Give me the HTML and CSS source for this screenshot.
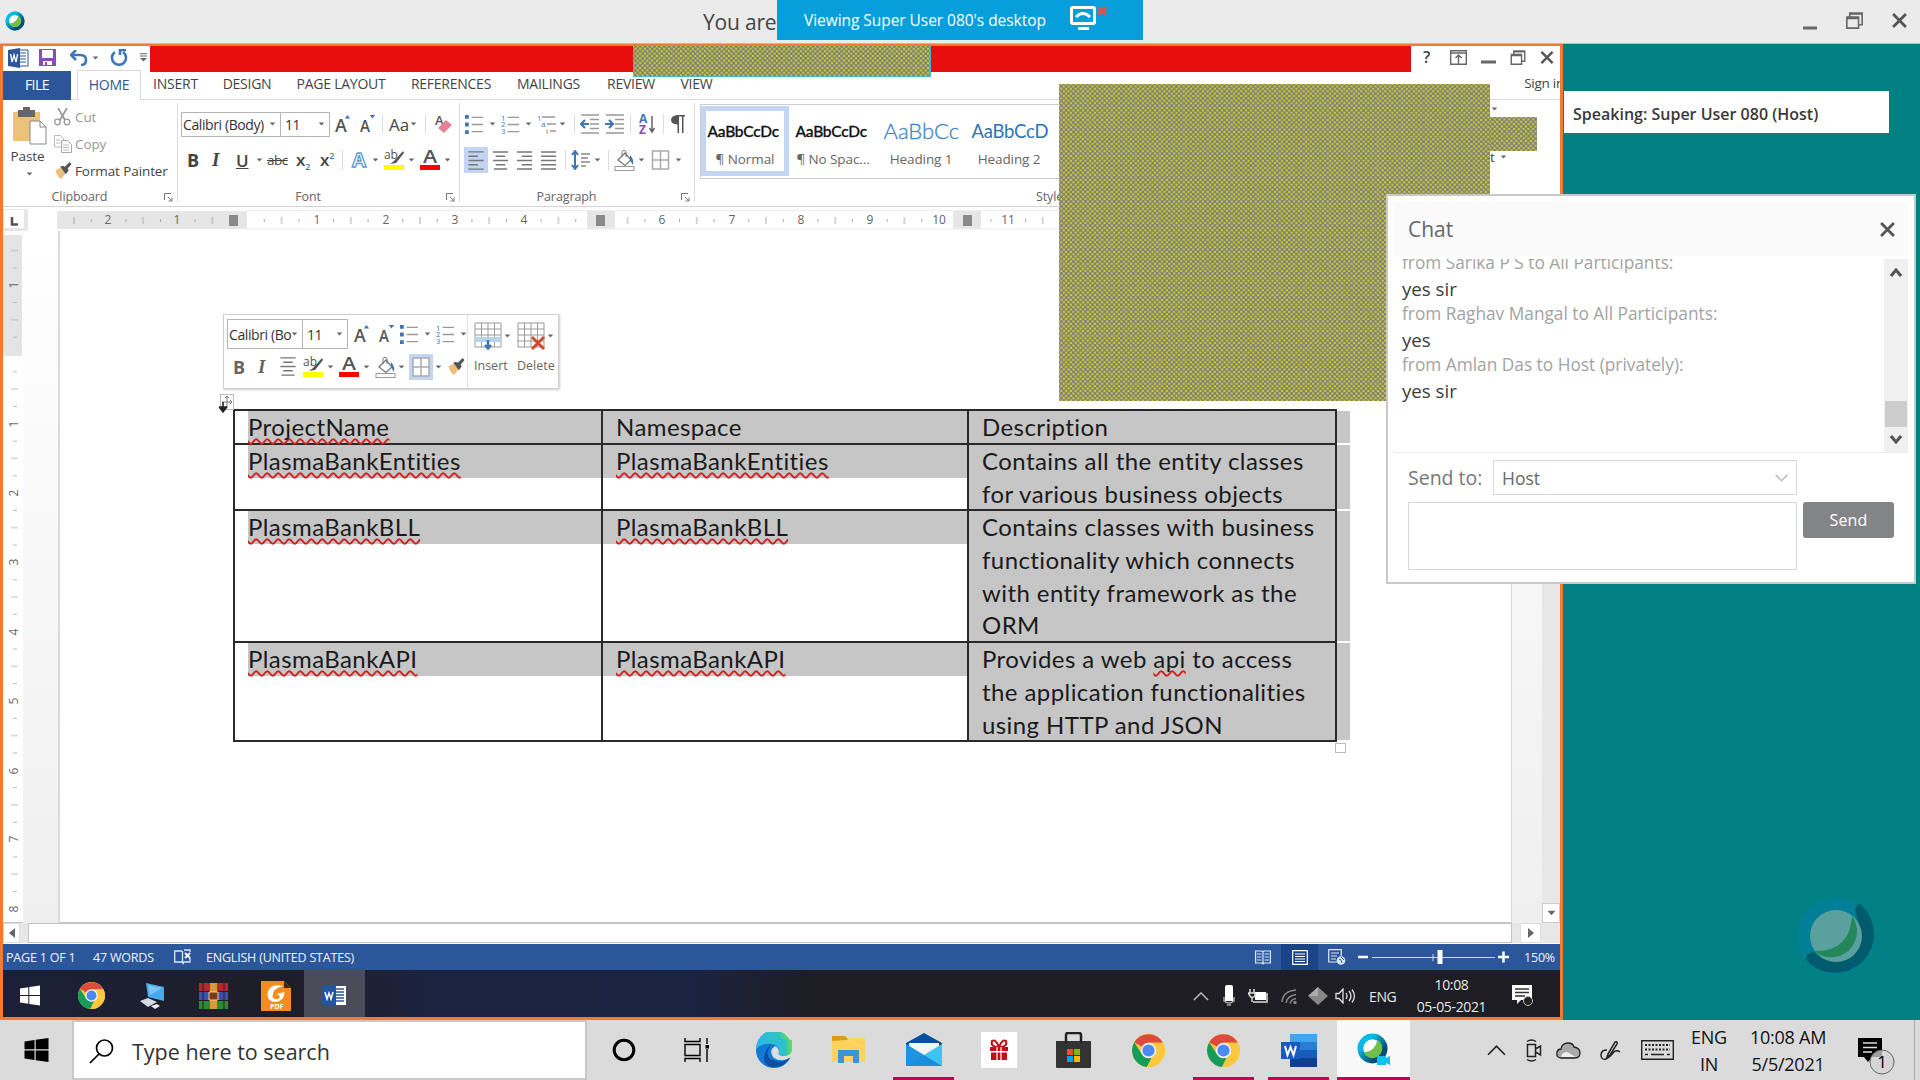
FILE: index.html
```html
<!DOCTYPE html>
<html lang="en">
<head>
<meta charset="utf-8">
<title>Viewing Super User 080's desktop</title>
<link rel="stylesheet" href="styles.css">
</head>
<body>
<svg class="defs" width="0" height="0">
  <defs>
    <symbol id="dd" viewBox="0 0 8 5"><path d="M0.5 0.5h7L4 4.5z" fill="#666"/></symbol>
    <symbol id="launch" viewBox="0 0 9 9"><path d="M.5 7V.5H7M4 4l3.5 3.5M8 4.500V8H4.500" fill="none" stroke="#777"/></symbol>
    <symbol id="bullets" viewBox="0 0 20 20"><path d="M0 2h4M0 10h4M0 18h4" stroke="#3f76b8" stroke-width="4"/><path d="M7 2.500h12M7 10h12M7 17.500h12" stroke="#999" stroke-width="1.400"/></symbol>
    <symbol id="numbers" viewBox="0 0 20 20"><g font-family="Open Sans" font-size="8" fill="#3f76b8"><text x="0" y="6">1</text><text x="0" y="13">2</text><text x="0" y="20">3</text></g><path d="M7 2.500h12M7 10h12M7 17.500h12" stroke="#999" stroke-width="1.400"/></symbol>
    <symbol id="bucket" viewBox="0 0 22 22"><rect x="1" y="17.500" width="19" height="4" fill="#fff" stroke="#999"/><path d="M4 11l7-7 6 7-6 5.500z" fill="#fff" stroke="#777" stroke-width="1.300"/><path d="M8 8V2.500q2-3 4 0V8" fill="none" stroke="#777"/><path d="M16 6q4 4 3 10-2-3-3-5z" fill="#3f76b8"/></symbol>
    <symbol id="grid4" viewBox="0 0 18 20"><path d="M1 1h16v18H1zM9 1v18M1 10h16" fill="#fff" stroke="#aaa" stroke-width="1.500"/></symbol>
    <symbol id="acenter" viewBox="0 0 18 20"><path d="M1 1h16M4 5.500h10M1 10h16M4 14.500h10M2 19h14" stroke="#777" stroke-width="1.400"/></symbol>
    <symbol id="hilite" viewBox="0 0 21 22"><text x="0" y="10" font-family="Open Sans" font-size="12" fill="#555">ab</text><path d="M19 2L10 12l-4 3 6-1 8-10z" fill="#555"/><path d="M0 18.500h20" stroke="#ff0" stroke-width="5"/></symbol>
    <symbol id="fontcol" viewBox="0 0 20 22"><text x="3" y="14" font-family="Open Sans" font-weight="600" font-size="18" fill="#555" textLength="14" lengthAdjust="spacingAndGlyphs">A</text><path d="M0 18.500h20" stroke="#f00" stroke-width="5"/></symbol>
    <symbol id="grow" viewBox="0 0 18 20"><text x="0" y="19" font-family="Open Sans" font-weight="600" font-size="20" fill="#555" textLength="13" lengthAdjust="spacingAndGlyphs">A</text><path d="M11 4l3-4 3 4z" fill="#3f76b8"/></symbol>
    <symbol id="shrink" viewBox="0 0 18 20"><text x="0" y="19" font-family="Open Sans" font-weight="600" font-size="17" fill="#555" textLength="11" lengthAdjust="spacingAndGlyphs">A</text><path d="M11 0h6l-3 4z" fill="#3f76b8"/></symbol>
    <symbol id="brush" viewBox="0 0 18 18"><path d="M1 9l5-3 6 6-5 6q-4-2-6-9z" fill="#eebf7a"/><path d="M6 5l3-1 2 1 5-5 2 2-4 5 1 2-3 4z" fill="#555"/></symbol>
    <symbol id="winlogo" viewBox="0 0 24 24"><path d="M0 3.500L10 2v9.300H0zM11.200 1.800L24 0v11.300H11.200zM0 12.600h10V22L0 20.500zM11.200 12.600H24V24L11.200 22.200z"/></symbol>
    <symbol id="chrome" viewBox="0 0 32 32"><circle cx="16" cy="16" r="16" fill="#fbc83b"/><path d="M16 16L2.200 8A16 16 0 0 1 30 8.500H16z" fill="#dd4b3e"/><path d="M2.200 8A16 16 0 0 0 14.500 32l7-12.500L16 16 9.500 19.700z" fill="#159c58"/><path d="M30 8.500H16l6 8L14.500 32A16 16 0 0 0 30 8.500z" fill="#fdc83e"/><circle cx="16" cy="16" r="7.400" fill="#f5f5f5"/><circle cx="16" cy="16" r="5.900" fill="#4a8af4"/></symbol>
    <symbol id="chev" viewBox="0 0 18 10"><path d="M1 9l8-8 8 8" fill="none" stroke="currentColor" stroke-width="1.600"/></symbol>
    <symbol id="pane" viewBox="0 0 16 16"><path d="M.8 4.800h11v10.400h-11zM3.500 4.500V1h11.700v11H12" fill="none" stroke="#666" stroke-width="1.500"/><path d="M.8 6h11M3.500 1.800h11.700" stroke="#666" stroke-width="1.500"/></symbol>
    <symbol id="cross" viewBox="0 0 14 14"><path d="M1 1l12 12M13 1L1 13" stroke="#555" stroke-width="2.600"/></symbol>
    <linearGradient id="ring" x1="0" y1="0" x2="1" y2="1"><stop offset=".25" stop-color="#07b9e8"/><stop offset=".75" stop-color="#064f73"/></linearGradient>
    <symbol id="webex" viewBox="0 0 32 32"><circle cx="16" cy="16" r="12.500" fill="#fff" stroke="url(#ring)" stroke-width="6"/><path d="M21 7a10 10 0 1 1-14 13Q19 19 21 7z" fill="#6fbf4a"/></symbol>
  </defs>
</svg>

<div class="screen">
  <header class="titlebar">
    <svg class="tb-logo" width="20" height="22"><use href="#webex" width="20" height="22"/></svg>
    <span class="tb-text">You are</span>
    <div class="tb-controls">
      <svg width="14" height="18"><path d="M0 16h14" stroke="#666" stroke-width="3"/></svg>
      <svg width="17" height="17"><use href="#pane"/></svg>
      <svg width="15" height="15"><use href="#cross"/></svg>
    </div>
    <div class="banner"><span>Viewing Super User 080's desktop</span>
      <svg width="38" height="26" viewBox="0 0 38 26"><rect x="1.500" y="1.500" width="23" height="16" rx="1.500" fill="none" stroke="#fff" stroke-width="3"/><path d="M6 11q7-7 14 0" fill="none" stroke="#fff" stroke-width="3"/><path d="M8 22.500h11" stroke="#fff" stroke-width="3"/><path d="M28 1.500l8 7M36 1.500l-8 7" stroke="#e0524e" stroke-width="3.200"/></svg>
    </div>
  </header>

  <main class="stage">
    <section class="remote">
      <div class="word-title">
        <div class="qat">
          <svg width="21" height="20" viewBox="0 0 21 20"><path d="M9 2h11v16H9z" fill="#fff" stroke="#2b579a"/><path d="M12 5h6M12 8h6M12 11h6M12 14h6" stroke="#2b579a"/><path d="M0 2l12-2v20L0 18z" fill="#2b579a"/><path d="M2.500 6l1.600 8L6 7l2 7 1.600-8" fill="none" stroke="#fff" stroke-width="1.300"/></svg>
          <svg width="17" height="17" viewBox="0 0 17 17"><path d="M0 0h17v17H0z" fill="#8a4db5"/><path d="M3 1h11v8H3zM4 12h9v4H4z" fill="#fff"/><path d="M6 13h2v3H6z" fill="#8a4db5"/></svg>
          <svg width="18" height="16" viewBox="0 0 18 16"><path d="M6 0L1 5l5 5M1 5h9q6 0 6 5t-5 5" fill="none" stroke="#3f76b8" stroke-width="2.600"/></svg>
          <svg width="7" height="4"><use href="#dd"/></svg>
          <svg width="18" height="17" viewBox="0 0 18 17"><path d="M5 3a7 7 0 1 0 8 0M10 6V1h6" fill="none" stroke="#3f76b8" stroke-width="2.600"/></svg>
          <svg width="7" height="9" viewBox="0 0 7 9"><path d="M0 .7h7M0 3h7" stroke="#666"/><path d="M0 5h7L3.500 8.500z" fill="#666"/></svg>
        </div>
        <div class="redbar"></div>
        <div class="word-ctl">
          <span>?</span>
          <svg width="17" height="15" viewBox="0 0 17 15"><path d="M.7.700h15.600v13.600H.7zM.7 3h15.600M8.500 14V5M5.500 8l3-3 3 3" fill="none" stroke="#666" stroke-width="1.400"/></svg>
          <svg width="15" height="14"><path d="M0 12h15" stroke="#666" stroke-width="3"/></svg>
          <svg width="16" height="15"><use href="#pane"/></svg>
          <svg width="14" height="13"><use href="#cross"/></svg>
        </div>
      </div>

      <nav class="tabs">
        <span class="file">FILE</span><span class="home">HOME</span><span>INSERT</span><span>DESIGN</span><span>PAGE LAYOUT</span><span>REFERENCES</span><span>MAILINGS</span><span>REVIEW</span><span>VIEW</span><span class="signin">Sign in</span>
      </nav>

      <div class="ribbon">
        <div class="group clip">
          <div class="paste">
            <svg width="34" height="38" viewBox="0 0 34 38"><path d="M0 5h27v29H0z" fill="#ecc27a"/><path d="M5 3h5V0h7v3h5v7H5z" fill="#666"/><path d="M17 14h10l6 6v17H17z" fill="#fff" stroke="#888"/><path d="M27 14v6h6" fill="none" stroke="#888"/></svg>
            <span>Paste</span>
            <svg width="7" height="4"><use href="#dd"/></svg>
          </div>
          <div class="cliplist">
            <svg width="17" height="18" viewBox="0 0 17 18"><path d="M4 0l7 12M13 0L6 12" stroke="#999" stroke-width="1.800"/><circle cx="3.500" cy="14" r="2.800" fill="none" stroke="#999" stroke-width="1.300"/><circle cx="13" cy="14" r="2.800" fill="none" stroke="#999" stroke-width="1.300"/></svg><span class="dim">Cut</span>
            <svg width="18" height="18" viewBox="0 0 18 18"><path d="M.5.500h6l3 3V12h-9z" fill="#fff" stroke="#bbb"/><path d="M7.500 5.500h6l4 4v8h-10z" fill="#fff" stroke="#aaa"/><path d="M9 10h6M9 12.500h6M9 15h6M2 5h4M2 8h4" stroke="#bbb"/></svg><span class="dim">Copy</span>
            <svg width="18" height="17"><use href="#brush"/></svg><span>Format Painter</span>
          </div>
          <div class="glabel"><span>Clipboard</span><svg width="9" height="9"><use href="#launch"/></svg></div>
        </div>

        <div class="group font">
          <div class="row f1">
            <div class="combo"><span>Calibri (Body)</span><svg width="7" height="4"><use href="#dd"/></svg></div>
            <div class="combo size"><span>11</span><svg width="7" height="4"><use href="#dd"/></svg></div>
            <svg width="18" height="18"><use href="#grow"/></svg>
            <svg width="18" height="18"><use href="#shrink"/></svg>
            <i class="sep"></i>
            <span class="aa">Aa</span>
            <svg width="7" height="4"><use href="#dd"/></svg>
            <i class="sep"></i>
            <svg width="17" height="20" viewBox="0 0 17 20"><text x="0" y="11" font-family="Open Sans" font-size="13" font-weight="600" fill="#555">A</text><path d="M3 14l8-8 6 5-8 8z" fill="#e58298"/></svg>
          </div>
          <div class="row f2">
            <b class="bold">B</b><i class="ital">I</i><span class="under">U</span><svg width="7" height="4"><use href="#dd"/></svg><s class="strike">abc</s>
            <span class="subx">x<sub>2</sub></span><span class="subx">x<sup>2</sup></span><i class="sep"></i>
            <svg width="16" height="20" viewBox="0 0 16 20"><text x="1" y="17" font-family="Open Sans" font-weight="700" font-size="20" fill="#fff" stroke="#5b9bd5" stroke-width="1.300" textLength="14" lengthAdjust="spacingAndGlyphs">A</text></svg>
            <svg width="7" height="4"><use href="#dd"/></svg>
            <svg width="21" height="22"><use href="#hilite"/></svg><svg width="7" height="4"><use href="#dd"/></svg>
            <svg width="20" height="22"><use href="#fontcol"/></svg><svg width="7" height="4"><use href="#dd"/></svg>
          </div>
          <div class="glabel"><span>Font</span><svg width="9" height="9"><use href="#launch"/></svg></div>
        </div>

        <div class="group para">
          <div class="row p1">
            <svg width="19" height="19"><use href="#bullets"/></svg><svg width="7" height="4"><use href="#dd"/></svg>
            <svg width="19" height="19"><use href="#numbers"/></svg><svg width="7" height="4"><use href="#dd"/></svg>
            <svg width="20" height="20" viewBox="0 0 20 20"><g font-family="Open Sans" font-size="8" fill="#3f76b8"><text x="0" y="7">1</text><text x="4" y="13">a</text><text x="9" y="20">i</text></g><path d="M5 3h13M10 10h9M13 17h6" stroke="#999" stroke-width="1.400"/></svg><svg width="7" height="4"><use href="#dd"/></svg>
            <i class="sep"></i>
            <svg width="20" height="20" viewBox="0 0 20 20"><path d="M1 1h18M10 5.500h9M10 10h9M10 14.500h9M1 19h18" stroke="#999" stroke-width="1.400"/><path d="M9 10H2M5 6l-4 4 4 4" fill="none" stroke="#3f76b8" stroke-width="2.200"/></svg>
            <svg width="20" height="20" viewBox="0 0 20 20"><path d="M1 1h18M10 5.500h9M10 10h9M10 14.500h9M1 19h18" stroke="#999" stroke-width="1.400"/><path d="M0 10h7M4 6l4 4-4 4" fill="none" stroke="#3f76b8" stroke-width="2.200"/></svg>
            <i class="sep"></i>
            <svg width="17" height="21" viewBox="0 0 17 21"><g font-family="Open Sans" font-weight="700" font-size="12"><text x="0" y="9" fill="#3f76b8">A</text><text x="0" y="20" fill="#8a4db5">Z</text></g><path d="M13 2v15M10.500 14l2.500 4 2.500-4" fill="none" stroke="#666" stroke-width="1.500"/></svg>
            <i class="sep"></i>
            <svg width="14" height="18" viewBox="0 0 14 18"><path d="M6 0h8v1.500h-1.500V18h-1.500V1.500H8V18H6.500V9.500Q0 9 0 5T6 0z" fill="#555"/></svg>
          </div>
          <div class="row p2">
            <div class="on"><svg width="18" height="19" viewBox="0 0 18 20"><path d="M1 1h16M1 5.500h10M1 10h16M1 14.500h10M1 19h16" stroke="#777" stroke-width="1.400"/></svg></div>
            <svg width="17" height="19"><use href="#acenter"/></svg>
            <svg width="17" height="19" viewBox="0 0 18 20"><path d="M1 1h16M6 5.500h11M1 10h16M6 14.500h11M1 19h16" stroke="#777" stroke-width="1.400"/></svg>
            <svg width="17" height="19" viewBox="0 0 18 20"><path d="M1 1h16M1 5.500h16M1 10h16M1 14.500h16M1 19h16" stroke="#777" stroke-width="1.400"/></svg>
            <i class="sep"></i>
            <svg width="20" height="20" viewBox="0 0 20 20"><path d="M4 2v16M1 5l3-4 3 4M1 15l3 4 3-4" fill="none" stroke="#3f76b8" stroke-width="2"/><path d="M10 4h9M10 8h7M10 12h9M10 16h5" stroke="#888" stroke-width="1.400"/></svg><svg width="7" height="4"><use href="#dd"/></svg>
            <i class="sep"></i>
            <svg width="22" height="22"><use href="#bucket"/></svg><svg width="7" height="4"><use href="#dd"/></svg>
            <svg width="19" height="20"><use href="#grid4"/></svg><svg width="7" height="4"><use href="#dd"/></svg>
          </div>
          <div class="glabel"><span>Paragraph</span><svg width="9" height="9"><use href="#launch"/></svg></div>
        </div>

        <div class="group styles">
          <div class="gallery">
            <div class="sty sel"><span>AaBbCcDc</span><small>¶ Normal</small></div>
            <div class="sty"><span>AaBbCcDc</span><small>¶ No Spac...</small></div>
            <div class="sty h1"><span>AaBbCc</span><small>Heading 1</small></div>
            <div class="sty h2"><span>AaBbCcD</span><small>Heading 2</small></div>
          </div>
          <div class="glabel"><span>Styles</span></div>
        </div>
        <div class="group edit">
          <svg width="7" height="4"><use href="#dd"/></svg>
          <span>t <svg width="7" height="4"><use href="#dd"/></svg></span>
        </div>
      </div>

      <div class="hruler">
        <svg width="1554" height="24" viewBox="3 207 1554 24">
          <defs><pattern id="ticks" x="247" y="0" width="69.2" height="300" patternUnits="userSpaceOnUse"><path d="M17.300 219v3M51.900 219v3" stroke="#aaa"/><path d="M34.600 217v7" stroke="#aaa"/></pattern></defs>
          <path d="M3 209h25v22H3z" fill="#e6e6e6"/><path d="M4 210h20v18H4z" fill="#fff"/><path d="M12 217v7.500h6" fill="none" stroke="#555" stroke-width="2.500"/>
          <path d="M57 211h190v18H57zM587 211h28v18h-28zM953 211h28v18h-28z" fill="#e6e6e6"/>
          <path d="M247 210.500h1145M247 229h1145" stroke="#eee"/>
          <path d="M66 211h160v18H66zM255 211h330v18H255zM616 211h336v18H616zM983 211h408v18H983z" fill="url(#ticks)"/>
          <path d="M229 215h9v11h-9zM596 215h9v11h-9zM963 215h9v11h-9z" fill="#8a8a8a"/>
          <g class="nums"><text x="108" y="224">2</text><text x="177" y="224">1</text><text x="317" y="224">1</text><text x="386" y="224">2</text><text x="455" y="224">3</text><text x="524" y="224">4</text><text x="662" y="224">6</text><text x="732" y="224">7</text><text x="801" y="224">8</text><text x="870" y="224">9</text><text x="939" y="224">10</text><text x="1008" y="224">11</text></g>
        </svg>
      </div>

      <div class="work">
        <div class="vruler">
          <svg width="20" height="692" viewBox="3 231 20 692">
            <defs><pattern id="vticks" x="0" y="354.500" width="30" height="69.300" patternUnits="userSpaceOnUse"><path d="M13 17.300h4M13 52h4" stroke="#bbb"/><path d="M11 34.600h7" stroke="#bbb"/></pattern></defs>
            <path d="M3 235h19v121H3z" fill="#e4e4e4"/><path d="M3 240h20v683H3z" fill="url(#vticks)"/>
            <g class="nums"><text transform="translate(18 285)rotate(-90)">1</text><text transform="translate(18 424)rotate(-90)">1</text><text transform="translate(18 493)rotate(-90)">2</text><text transform="translate(18 562)rotate(-90)">3</text><text transform="translate(18 632)rotate(-90)">4</text><text transform="translate(18 701)rotate(-90)">5</text><text transform="translate(18 771)rotate(-90)">6</text><text transform="translate(18 839)rotate(-90)">7</text><text transform="translate(18 909)rotate(-90)">8</text></g>
          </svg>
        </div>
        <div class="gutter"></div>
        <div class="page">
          <div class="tablewrap">
            <table>
              <colgroup><col class="c1"><col class="c2"><col class="c3"></colgroup>
              <tr class="r1"><td><p><u>ProjectName</u></p></td><td><p>Namespace</p></td><td><p>Description</p></td></tr>
              <tr class="r2"><td><p><u>PlasmaBankEntities</u></p></td><td><p><u>PlasmaBankEntities</u></p></td><td><p>Contains all the entity classes<br>for various business objects</p></td></tr>
              <tr class="r3"><td><p><u>PlasmaBankBLL</u></p></td><td><p><u>PlasmaBankBLL</u></p></td><td><p>Contains classes with business<br>functionality which connects<br>with entity framework as the<br>ORM</p></td></tr>
              <tr class="r4"><td><p><u>PlasmaBankAPI</u></p></td><td><p><u>PlasmaBankAPI</u></p></td><td><p>Provides a web <u>api</u> to access<br>the application functionalities<br>using HTTP and JSON</p></td></tr>
            </table>
            <div class="tail"><i></i><i></i><i></i><i></i></div>
          </div>
          <svg class="handle" width="19" height="22" viewBox="0 0 19 22"><rect x="2.500" y=".5" width="13" height="15" fill="#fff" stroke="#bbb"/><path d="M9 2v12M4 8h10M7 4l2-2 2 2M12 6l2 2-2 2" fill="none" stroke="#777"/><path d="M5 8v10M1 13h8M2 14l3 4 3-4z" fill="#222" stroke="#222" stroke-width="1.600"/></svg>
          <i class="corner"></i>
          <div class="mini">
            <div class="mtools">
              <div class="row m1">
                <div class="combo"><span>Calibri (Bo</span><svg width="7" height="4"><use href="#dd"/></svg></div>
                <div class="combo size"><span>11</span><svg width="7" height="4"><use href="#dd"/></svg></div>
                <svg width="18" height="18"><use href="#grow"/></svg><svg width="18" height="18"><use href="#shrink"/></svg>
                <svg width="19" height="19"><use href="#bullets"/></svg><svg width="7" height="4"><use href="#dd"/></svg>
                <svg width="19" height="19"><use href="#numbers"/></svg><svg width="7" height="4"><use href="#dd"/></svg>
              </div>
              <div class="row m2">
                <b class="bold">B</b><i class="ital">I</i><svg width="18" height="19"><use href="#acenter"/></svg>
                <svg width="21" height="22"><use href="#hilite"/></svg><svg width="7" height="4"><use href="#dd"/></svg>
                <svg width="20" height="22"><use href="#fontcol"/></svg><svg width="7" height="4"><use href="#dd"/></svg>
                <svg width="22" height="22"><use href="#bucket"/></svg><svg width="7" height="4"><use href="#dd"/></svg>
                <div class="on"><svg width="18" height="20"><use href="#grid4"/></svg></div><svg width="7" height="4"><use href="#dd"/></svg>
                <svg width="18" height="17"><use href="#brush"/></svg>
              </div>
            </div>
            <div class="mbig"><div><svg width="30" height="28" viewBox="0 0 30 28"><path d="M1 1h26v24H1zM1 7h26M1 13h26M1 19h26M7.500 1v24M14 1v24M20.500 1v24" fill="#fff" stroke="#999"/><path d="M1 15h26v5H1z" fill="#b8d3ee"/><path d="M14 18v8M11 23l3 3.500 3-3.500" fill="none" stroke="#3f76b8" stroke-width="2.500"/></svg><svg width="7" height="4"><use href="#dd"/></svg></div><span>Insert</span></div>
            <div class="mbig del"><div><svg width="30" height="28" viewBox="0 0 30 28"><path d="M1 1h26v24H1zM1 7h26M1 13h26M1 19h26M7.500 1v24M14 1v24M20.500 1v24" fill="#fff" stroke="#999"/><path d="M15 15l12 12M27 15L15 27" stroke="#d04a30" stroke-width="3"/></svg><svg width="7" height="4"><use href="#dd"/></svg></div><span>Delete</span></div>
          </div>
        </div>
        <div class="gutter right"></div>
        <div class="vscroll"><div><svg width="9" height="6"><use href="#dd" width="9" height="6"/></svg></div></div>
      </div>

      <div class="hscroll"><div class="sb"><svg width="6" height="10"><path d="M6 0v10L0 5z" fill="#666"/></svg></div><div class="thumb"></div><div class="sb r"><svg width="6" height="10"><path d="M0 0v10l6-5z" fill="#666"/></svg></div></div>

      <div class="status">
        <span>PAGE 1 OF 1</span><span>47 WORDS</span>
        <svg width="18" height="16" viewBox="0 0 18 16"><path d="M8 2H.7v11H8l1 1.500 1-1.500h6V9M8.500 2v12M10 1h6v2" fill="none" stroke="#dfe8f5" stroke-width="1.300"/><path d="M11 4l5 5M16 4l-5 5" stroke="#fff" stroke-width="1.800"/></svg>
        <span>ENGLISH (UNITED STATES)</span>
        <svg width="16" height="15" viewBox="0 0 16 15"><path d="M.6 1H7l1 1 1-1h6.400v12H9l-1 1-1-1H.6zM8 2v12M2 4h4.500M2 7h4.500M2 10h4.500M9.500 4H14M9.500 7H14M9.500 10H14" fill="none" stroke="#dfe8f5" stroke-width="1.200"/></svg>
        <div class="view"><svg width="16" height="15" viewBox="0 0 16 15"><path d="M.7.700h14.600v13.600H.7zM3 4h10M3 6.500h10M3 9h10M3 11.500h10" fill="none" stroke="#fff" stroke-width="1.200"/></svg></div>
        <svg width="18" height="16" viewBox="0 0 18 16"><path d="M9 13H.7V.7h12.600V7M3 4h8M3 7h6M3 10h5" fill="none" stroke="#dfe8f5" stroke-width="1.200"/><circle cx="13" cy="11.500" r="4.300" fill="#dfe8f5"/><path d="M11 10l2 1 1 3M13 8l3 3" stroke="#2b579a" fill="none"/></svg>
        <svg width="154" height="16" viewBox="0 0 154 16"><path d="M1 8h10M141 8h11M146.500 2.500v11" stroke="#fff" stroke-width="2.500"/><path d="M15 8.500h123" stroke="#cdd9ec"/><path d="M76 5v7" stroke="#cdd9ec"/><path d="M83 1v14" stroke="#fff" stroke-width="5"/></svg>
        <span>150%</span>
      </div>

      <div class="inner-bar">
        <div class="cell"><svg width="20" height="21" fill="#fff"><use href="#winlogo" width="20" height="21"/></svg></div>
        <div class="cell"><svg width="27" height="27"><use href="#chrome"/></svg></div>
        <div class="cell"><svg width="28" height="27" viewBox="0 0 28 27"><path d="M7 1l18 4v14L9 15z" fill="#4aa9ee"/><path d="M9 3l14 3-12 7z" fill="#7cc6f7"/><path d="M1 19l8-3 9 4-9 5z" fill="#d5dbe0"/><path d="M12 24l6-2 3 2-5 3z" fill="#e8ecef"/></svg></div>
        <div class="cell"><svg width="30" height="26" viewBox="0 0 30 26"><path d="M0 0h29v8H0z" fill="#b5262f"/><path d="M0 9h29v8H0z" fill="#3d4fb0"/><path d="M0 18h29v8H0z" fill="#2c8a36"/><path d="M11 0h7v26h-7z" fill="#d79b33"/><path d="M10 9h9v8h-9z" fill="#7a3a22" stroke="#f3d27a"/><path d="M4 0v26M25 0v26" stroke="#222" stroke-opacity=".5" stroke-width="2"/></svg></div>
        <div class="cell"><svg width="30" height="30" viewBox="0 0 30 30"><path d="M0 0h23l7 7v23H0z" fill="#f68b1f"/><path d="M23 0v7h7" fill="#3a2a1a"/><path d="M22 5Q8 2 6.500 13q0 8 8 8 9-1 9-10l-8 2q4 1 3 4-4 3-7-1 0-9 10.500-11z" fill="#fff"/><text x="9" y="28" font-family="Open Sans" font-weight="700" font-size="7" fill="#fff">PDF</text></svg></div>
        <div class="cell active"><svg width="25" height="21" viewBox="0 0 25 21"><path d="M12 1h12v19H12z" fill="#fff"/><path d="M14 4h8M14 7h8M14 10h8M14 13h8M14 16h8" stroke="#2b579a" stroke-width="1.500"/><path d="M0 1l14-1v21L0 20z" fill="#20559f"/><path d="M3 7l2 7 2-6 2 6 2-7" fill="none" stroke="#fff" stroke-width="1.500"/></svg></div>
        <div class="itray">
          <svg width="16" height="9" color="#bbb"><use href="#chev"/></svg>
          <svg width="14" height="22" viewBox="0 0 14 22"><rect x="3" y="0" width="8" height="15" rx="2" fill="#fff"/><path d="M2 12v4q5 4 10 0v-4M5 20h4" fill="none" stroke="#aaa" stroke-width="1.500"/><path d="M3 6h8v10H3z" fill="#fff"/></svg>
          <svg width="21" height="15" viewBox="0 0 21 15"><path d="M7 3h11v8H7z" fill="#fff"/><path d="M5 13h14V4M2 0v4M6 0v4M0 4h7v3q-3 3-5 0zM4 9v4" fill="none" stroke="#ddd" stroke-width="1.500"/></svg>
          <svg width="17" height="17" viewBox="0 0 17 17" fill="none" stroke="#888" stroke-width="1.500"><path d="M1 14Q2 3 15 2M5 15Q6 8 15 6.500M9 15.500q1-4 6-5"/><circle cx="14" cy="14.500" r="1" fill="#ddd"/></svg>
          <svg width="20" height="18" viewBox="0 0 20 18"><path d="M10 0l10 9-10 9L0 9z" fill="#888"/><path d="M10 0v9H0z" fill="#aaa"/></svg>
          <svg width="21" height="16" viewBox="0 0 21 16" fill="none" stroke="#ddd" stroke-width="1.300"><path d="M1 5.500h3L8 1v14l-4-4.500H1zM11 5q2 3 0 6M14 3q4 5 0 10M17 1.500q5 6.500 0 13"/></svg>
          <span>ENG</span><div class="clock"><span>10:08</span><span>05-05-2021</span></div>
          <svg width="22" height="22" viewBox="0 0 22 22"><path d="M0 0h20v15H9l-4 4v-4H0z" fill="#fff"/><path d="M3 4h14M3 7.500h14M3 11h10" stroke="#333" stroke-width="1.300"/><circle cx="16" cy="16" r="4.500" fill="#222" stroke="#bbb"/></svg>
        </div>
      </div>
      <div class="hatch top"></div>
      <div class="hatch big"></div>
      <div class="hatch ear"></div>
    </section>

    <aside class="side">
      <div class="speaking">Speaking: Super User 080 (Host)</div>
      <svg class="mark" width="80" height="80" viewBox="0 0 80 80"><circle cx="40" cy="40" r="39" fill="#007f96"/><path d="M64 8A39 39 0 1 1 10 64Q10 57 17 56 38 70 58 51 66 35 59 14 60 8 64 8z" fill="#005c6c"/><circle cx="40" cy="40" r="26" fill="#5b9f9f"/><path d="M56 20A26 26 0 0 1 18 55Q54 56 56 20z" fill="#238759"/></svg>
    </aside>

    <section class="chat">
      <div class="chat-head"><span>Chat</span><svg width="15" height="15"><use href="#cross"/></svg></div>
      <div class="chat-body">
        <div class="msgs"><p class="from">from Sarika P S to All Participants:</p><p>yes sir</p><p class="from">from Raghav Mangal to All Participants:</p><p>yes</p><p class="from">from Amlan Das to Host (privately):</p><p>yes sir</p></div>
        <div class="cscroll"><svg width="12" height="9" viewBox="0 0 12 9"><path d="M1 8l5-6 5 6" fill="none" stroke="#555" stroke-width="3"/></svg><i></i><svg width="12" height="9" viewBox="0 0 12 9"><path d="M1 1l5 6 5-6" fill="none" stroke="#555" stroke-width="3"/></svg></div>
      </div>
      <div class="chat-form">
        <label>Send to:</label><div class="select"><span>Host</span><svg width="13" height="8" viewBox="0 0 13 8"><path d="M.7.700l5.800 6 5.800-6" fill="none" stroke="#bbb" stroke-width="1.600"/></svg></div>
        <div class="input"></div><button>Send</button>
      </div>
    </section>
  </main>

  <footer class="taskbar">
    <div class="start"><svg width="25" height="24"><use href="#winlogo"/></svg></div>
    <div class="search"><svg width="25" height="25" viewBox="0 0 25 25"><circle cx="15.500" cy="9" r="8" fill="none" stroke="#000" stroke-width="1.700"/><path d="M10 15L1 24" stroke="#000" stroke-width="1.700"/></svg><span>Type here to search</span></div>
    <div class="apps">
      <div><svg width="24" height="24"><circle cx="12" cy="12" r="9.800" fill="none" stroke="#000" stroke-width="3"/></svg></div>
      <div><svg class="tv" width="26" height="24" viewBox="0 0 26 24"><path d="M1 6.500h15v11H1zM1 0v3.500h15V0M1 24v-3.500h15V24M23 0v6M23 11v13" fill="none" stroke="#000" stroke-width="1.400"/><path d="M21.500 7h3.500v3.500h-3.500z"/></svg></div>
      <div><svg width="36" height="36" viewBox="0 0 36 36"><defs><linearGradient id="ed"><stop offset="0" stop-color="#2fb5ea"/><stop offset=".6" stop-color="#2dc5c0"/><stop offset="1" stop-color="#6be14a"/></linearGradient></defs><circle cx="18" cy="18" r="18" fill="#0f7bd6"/><path d="M0 17A18 18 0 0 1 36 16q0 9-9 8-6-1-4-4 1-7-7-8Q5 11 0 17z" fill="url(#ed)"/><path d="M15 13Q6 26 20 29q9 2 14-4-5 11-18 10Q4 32 10 19q2-4 5-6z" fill="#0c4ea0"/><path d="M19 14q-7 5-1 12 8 5 18-1.500V18q-1 6-9 6-6-1-4-4 0-4-4-6z" fill="#dcdcdc"/><path d="M19.500 14q5 2 3.500 6-2 3 4 4 8 0 9-7V8L22 6z" fill="url(#ed)"/></svg></div>
      <div><svg width="33" height="28" viewBox="0 0 33 28"><path d="M0 0h13l3 3v3H0z" fill="#dc9c12"/><path d="M0 5l15-1 2-2h16v24H0z" fill="#ffd35e"/><path d="M6 27V14h21v13h-6v-7h-9v7z" fill="#3b93d8"/></svg></div>
      <div class="run"><svg width="36" height="34" viewBox="0 0 36 34"><path d="M0 10L18 0l18 10v6H0z" fill="#0a4f9e"/><path d="M3 10h30v14H3z" fill="#f4f4f4"/><path d="M0 11l36 22H0z" fill="#1f93e0"/><path d="M36 11v22L18 22z" fill="#3cc5f2"/><path d="M0 33h36L18 22z" fill="#1a8fdc"/></svg></div>
      <div><svg width="36" height="36" viewBox="0 0 36 36"><path d="M0 0h36v36H0z" fill="#fff"/><path d="M9 15h18v4H9zM10 20.500h16V28H10z" fill="#c01018"/><path d="M18 15Q9 15 11 9q4-2 7 6 3-8 7-6 2 6-7 6z" fill="none" stroke="#c01018" stroke-width="2"/><path d="M16 15v13M20 15v13" stroke="#fff" stroke-width="1.200"/></svg></div>
      <div><svg width="35" height="36" viewBox="0 0 35 36"><path d="M0 9h35v26q0 1-1 1H1q-1 0-1-1z" fill="#333"/><path d="M10 11V3q0-2 2-2h11q2 0 2 2v8" fill="none" stroke="#222" stroke-width="2.500"/><path d="M11 17h6v6h-6z" fill="#f25022"/><path d="M18 17h6v6h-6z" fill="#7fba00"/><path d="M11 24h6v6h-6z" fill="#00a4ef"/><path d="M18 24h6v6h-6z" fill="#ffb900"/></svg></div>
      <div><svg width="33" height="33"><use href="#chrome"/></svg></div>
      <div class="run"><svg width="33" height="33"><use href="#chrome"/></svg></div>
      <div class="run"><svg width="36" height="33" viewBox="0 0 36 33"><path d="M9 0h27v8H9z" fill="#41a5ee"/><path d="M9 8h27v8H9z" fill="#2b7cd3"/><path d="M9 16h27v8H9z" fill="#185abd"/><path d="M9 24h27v9H9z" fill="#103f91"/><path d="M0 8h19v17H0z" fill="#185abd"/><path d="M4 12l2.500 9L9.500 13l3 8 2.500-9" fill="none" stroke="#fff" stroke-width="2"/></svg></div>
      <div class="cur"><svg width="34" height="34" viewBox="0 0 34 34"><use href="#webex" width="31" height="31"/><path d="M20 23h9v2l4-2v9l-4-2v2h-9z" fill="#11bff0"/></svg></div>
    </div>
    <div class="tray">
      <svg width="19" height="11" color="#222"><use href="#chev"/></svg>
      <svg width="17" height="23" viewBox="0 0 17 23" fill="none" stroke="#222" stroke-width="1.500"><path d="M2.500 5.500h8v12h-8zM10.500 10l5-3v9l-5-3M2 2.500q4.500-3 9 0M2 20.500q4.500 3 9 0"/></svg>
      <svg width="25" height="17" viewBox="0 0 25 17"><path d="M5 16Q0 16 1 10q1-3 4-3Q6 1 12 1q5 0 6 4 6 1 6 6 0 5-5 5z" fill="#aaa" stroke="#222" stroke-width="1.300"/><path d="M5 15q1-5 6-5l9 5z" fill="#eee"/></svg>
      <svg width="21" height="21" viewBox="0 0 21 21" fill="none" stroke="#222" stroke-width="1.500"><path d="M8 14L15 2q3-1 2 2L10 15l-3 2zM7 10q-6 0-6 5t5 4q4-2 7-6t7-1"/></svg>
      <svg width="33" height="20" viewBox="0 0 33 20"><path d="M.7.700h31.600v18.600H.7z" fill="none" stroke="#222" stroke-width="1.400"/><path d="M4 5h25M4 9.500h25" stroke="#222" stroke-width="1.800" stroke-dasharray="2 1.500"/><path d="M4 14.500h3M10 14.500h13M26 14.500h3" stroke="#222" stroke-width="1.500"/></svg>
      <div class="clock"><span>ENG</span><span>IN</span></div>
      <div class="clock time"><span>10:08 AM</span><span>5/5/2021</span></div>
      <svg class="note" width="38" height="38" viewBox="0 0 38 38"><path d="M0 0h24v19H14l-4 5-4-5H0z"/><path d="M5 5h14M5 9.500h14M5 14h9" stroke="#ddd" stroke-width="1.300"/><circle cx="24" cy="24" r="12" fill="#d4d4d4" fill-opacity=".75" stroke="#666"/><text x="24" y="30" text-anchor="middle" font-family="Open Sans" font-size="17">1</text></svg>
      <i class="edge"></i>
    </div>
  </footer>
</div>
</body>
</html>
```
FILE: styles.css
```css
* { box-sizing: border-box; margin: 0; padding: 0; }
body { width: 1920px; height: 1080px; overflow: hidden; font-family: "Open Sans", "Noto Sans", sans-serif; color: #444; }
svg { display: block; flex: none; }
.defs { position: absolute; }
.screen { display: grid; grid-template-rows: 44px 976px 60px; height: 1080px; }
span, p, small, label { white-space: nowrap; }

/* meeting window title bar */
.titlebar { position: relative; display: flex; align-items: center; background: #ebebeb; border-bottom: 1px solid #bbb; }
.tb-logo { margin: 0 0 2px 5px; }
.tb-text { margin-left: 678px; font-size: 21px; letter-spacing: -0.2px; }
.tb-controls { display: flex; align-items: center; margin: -2px 13px 0 auto; gap: 29px; }
.banner { position: absolute; left: 777px; top: 0; width: 366px; height: 40px; background: #069edb; color: #fff; display: flex; align-items: center; padding-left: 27px; font-size: 15.5px; letter-spacing: -0.05px; }
.banner svg { margin: -3px 35px 0 auto; }

.stage { position: relative; display: grid; grid-template-columns: 1563px 1fr; background: #008080; }
.remote { position: relative; border: 3px solid #f47a32; border-width: 2px 3px 3px; background: #fff; display: grid; grid-template-rows: 24px 30px 107px 24px 692px 21px 26px 47px; grid-template-columns: 1557px; overflow: hidden; }

.word-title { display: grid; grid-template-columns: 147px 1261px 1fr; }
.redbar { background: #e90e0e; }
.qat { display: grid; grid-template-columns: 31px 31px 22px 18px 30px 8px; padding: 0 0 3px 5px; align-items: center; }
.word-ctl { display: grid; grid-template-columns: 27px 31px 29px 30px 20px; padding: 0 0 4px 12px; align-items: center; font-size: 16px; font-weight: 600; }

.tabs { display: grid; grid-template-columns: 68px 75px 59px 84px 104px 116px 79px 86px 45px 1fr; border-bottom: 1px solid #d9d9d9; font-size: 14px; line-height: 28px; letter-spacing: -0.25px; }
.tabs span { text-align: center; }
.tabs .file { background: #2b579a; color: #fff; margin-top: 1px; height: 29px; line-height: 27px; letter-spacing: -0.5px; }
.tabs .home { color: #2b579a; border: 1px solid #d9d9d9; border-bottom: 0; background: #fff; margin: 0 5px 0 6px; height: 30px; line-height: 27px; }
.tabs .signin { text-align: right; margin-right: -4px; line-height: 26px; font-size: 13.5px; }

/* ribbon */
.ribbon { display: grid; grid-template-columns: 175px 282px 235px 681px 1fr; border-bottom: 1px solid #d4d4d4; font-size: 13.5px; letter-spacing: -0.1px; }
.group { position: relative; display: grid; grid-template-rows: 34px 38px 8px 18px; grid-template-columns: 100%; padding-top: 7px; }
.group::after { content: ""; position: absolute; right: 0; top: 3px; bottom: 4px; width: 1px; background: #dcdcdc; }
.row { display: grid; align-items: center; justify-items: start; }
.sep { width: 1px; height: 20px; background: #ddd; }
.glabel { grid-row: 4; display: flex; align-items: center; justify-content: center; color: #666; font-size: 12.5px; position: relative; padding-right: 22px; }
.glabel svg { position: absolute; right: 5px; top: 6px; }
.clip { grid-template-columns: 51px 1fr; }
.paste { grid-row: 1 / 4; display: flex; flex-direction: column; align-items: center; padding-left: 2px; }
.paste span { line-height: 20px; margin: 1px 0 6px -4px; }
.cliplist { grid-row: 1 / 4; display: grid; grid-template: repeat(3, 27px) / 21px 1fr; align-items: center; margin-top: -4px; }
.clip .glabel { grid-column: 1 / 3; }
.dim { color: #999; }
.combo { display: flex; align-items: center; justify-content: space-between; width: 100px; height: 25px; border: 1px solid #b5b5b5; padding: 0 4px 0 1px; font-size: 14px; color: #333; }
.combo span { letter-spacing: -0.4px; }
.combo.size { width: 50px; padding-left: 4px; }
.f1 { padding-left: 3px; grid-template-columns: 99px 54px 25px 23px 7px 21px 15px 10px 20px; }
.f2 { padding-left: 9px; grid-template-columns: 25px 24px 20px 11px 29px 24px 22px 9px 21px 12px 24px 12px 24px 10px; }
.aa { font-size: 17px; }
.bold { font-size: 18px; }
.ital { font: italic 700 19px "Liberation Serif", serif; }
.under { font-size: 17px; text-decoration: underline; font-weight: 600; }
.strike { font-size: 13.5px; letter-spacing: -0.5px; }
.subx { font-size: 17px; font-weight: 600; line-height: 20px; }
.subx sub, .subx sup { font-size: 9px; color: #3f76b8; line-height: 0; }
.p1 { padding-left: 5px; grid-template-columns: 24px 12px 24px 12px 22px 15px 6px 25px 25px 9px 24px 8px 20px; }
.p2 { padding-left: 4px; grid-template-columns: 28px 24px 24px 25px 6px 23px 14px 6px 24px 13px 24px 8px; }
.on { width: 24px; height: 26px; background: #c2d5f2; display: grid; place-items: center; }
.gallery { grid-row: 1 / 3; display: grid; grid-template-columns: repeat(4, 88px); height: 75px; margin: -3px 0 0 5px; border: 1px solid #ccc; padding: 1px 0; overflow: hidden; }
.sty { display: flex; flex-direction: column; align-items: center; padding-top: 13px; color: #111; }
.sty.sel { padding-top: 8px; border: 5px solid #c2d5f2; height: 70px; }
.sty span { font: 500 15.5px/24px Lato, sans-serif; width: 75px; letter-spacing: -0.25px; -webkit-text-stroke: .3px; }
.sty small { font-size: 13.5px; line-height: 20px; margin-top: 6px; color: #666; }
.sty.h1 span { font-size: 22px; font-weight: 300; color: #3d84c4; letter-spacing: 0; }
.sty.h2 span { font-size: 18.5px; font-weight: 400; color: #2e74b5; -webkit-text-stroke: 0; }
.styles .glabel { justify-content: flex-start; padding: 0 0 0 341px; }
.styles::after, .edit::after { display: none; }
.edit { padding-left: 115px; grid-template-rows: 20px 60px; }
.edit span { display: flex; gap: 5px; align-items: center; margin-left: -1px; }

.nums { font-family: "Open Sans", sans-serif; font-size: 12px; fill: #666; text-anchor: middle; }

/* document area */
.work { display: grid; grid-template-columns: 20px 37px 1451px 31px 1fr; border-bottom: 1px solid #c6c6c6; }
.gutter { background: linear-gradient(#fff, #efefef); border-right: 2px solid #dadada; }
.gutter.right { border-right: 0; border-left: 1px solid #dadada; }
.vscroll { background: #e7e7e7; display: flex; align-items: flex-end; }
.vscroll div { width: 18px; height: 20px; background: #fff; border: 1px solid #ccc; display: grid; place-items: center; }
.page { position: relative; padding: 178px 0 0 173px; color: #1a1a1a; }
.tablewrap { display: flex; }
table { border-collapse: collapse; table-layout: fixed; width: 1103px; font: 24px/32.8px Lato, sans-serif; letter-spacing: 0.42px; }
.c1 { width: 368px; } .c2 { width: 366px; } .c3 { width: 368px; }
td { border: 2px solid #2a2a2a; vertical-align: top; padding: 0; }
td p { background: #c6c6c6; padding-left: 13px; margin-bottom: -3px; }
td:first-child p { margin-left: 13px; padding-left: 0; }
td:last-child { background: #c6c6c6; }
.r1 { height: 34px; } .r2 { height: 66px; } .r3 { height: 132px; } .r4 { height: 99px; }
td u { text-decoration: underline wavy #d02020 1.5px; text-decoration-skip-ink: none; text-underline-offset: 2px; }
.tail { display: grid; grid-template-rows: 32px 64px 130px 97px; gap: 2px; width: 13px; padding-top: 2px; }
.tail i { background: #c6c6c6; }
.handle { position: absolute; left: 158px; top: 163px; }
.corner { position: absolute; left: 1275px; top: 512px; width: 11px; height: 10px; border: 1px solid #bbb; background: #fff; }
.mini { position: absolute; left: 163px; top: 83px; width: 336px; height: 75px; border: 1px solid #cfcfcf; background: #fff; box-shadow: 1px 1px 2px #ccc; display: grid; grid-template-columns: 245px 43px 46px; font-size: 12.5px; color: #666; }
.mtools { display: grid; grid-template-rows: 30px 35px; padding-top: 4px; border-right: 1px solid #e2e2e2; margin-right: 1px; }
.m1 { padding-left: 3px; grid-template-columns: 75px 51px 25px 22px 24px 12px 24px 8px; }
.m1 .combo { width: 76px; height: 30px; }
.m1 .combo.size { width: 46px; }
.m2 { padding-left: 9px; grid-template-columns: 25px 21px 24px 24px 12px 24px 12px 23px 11px 26px 12px 18px; }
.mbig { padding: 7px 0 0 5px; }
.mbig div { display: flex; align-items: center; margin-bottom: 7px; }

.hscroll { display: grid; grid-template-columns: 17px 8px 1484px 8px 21px; background: #e7e7e7; height: 20px; }
.sb { background: #fff; border: 1px solid #ddd; display: grid; place-items: center; }
.thumb { background: #fff; border: 1px solid #c2c2c2; grid-column: 3; }
.sb.r { grid-column: 5; }

.status { background: #2b579a; color: #f0f4fa; display: grid; grid-template-columns: 87px 81px 32px 1049px 26px 47px 29px 167px 1fr; align-items: center; padding-left: 3px; font-size: 12.5px; letter-spacing: -0.2px; }
.view { background: #1b4486; height: 26px; width: 37px; display: grid; place-items: center; }

.inner-bar { display: grid; grid-template-columns: 53px 72px 50px 72px 51px 12px 1fr; grid-template-columns: 54px 69px 54px 68px 56px 61px 1fr; background: linear-gradient(90deg, #1a2038 0, #1e1e26 18%, #1b2340 28%, #1b2342 44%, #1e1d23 52%); color: #e8e8e8; }
.cell { display: grid; place-items: center; padding-top: 3px; }
.cell.active { background: #4b4c59; }
.itray { display: grid; grid-template-columns: 29px 26px 33px 27px 27px 34px 38px 105px 30px; padding: 4px 0 0 828px; align-items: center; font-size: 14px; letter-spacing: -0.35px; }
.clock { display: flex; flex-direction: column; align-items: center; line-height: 22px; }
.itray .clock { padding-right: 16px; }

/* hatched cover blocks */
.hatch { position: absolute; background: radial-gradient(circle, #808080 1.2px, transparent 1.9px) 0 0 / 4.8px 4.8px, radial-gradient(circle, #808080 1.2px, transparent 1.9px) 2.4px 2.4px / 4.8px 4.8px, #cccc2c; }
.hatch.top { left: 630px; top: -2px; width: 298px; height: 33px; border-right: 1px solid #4ab3cf; border-bottom: 1px solid #4ab3cf; }
.hatch.big { left: 1056px; top: 38px; width: 431px; height: 317px; }
.hatch.ear { left: 1487px; top: 71px; width: 47px; height: 34px; }

/* side panel */
.side { position: relative; padding: 47px 0 0 1px; }
.speaking { width: 325px; height: 42px; background: #fff; padding-left: 9px; font-size: 16px; font-weight: 600; line-height: 46px; letter-spacing: 0; color: #3a3a3a; white-space: nowrap; }
.mark { position: absolute; left: 233px; top: 852px; }

.chat { position: absolute; left: 1386px; top: 150px; width: 530px; height: 390px; background: #fff; border: 2px solid #c9c9c9; padding: 6px; display: grid; grid-template-rows: 57px 194px 1fr; }
.chat-head { background: #fafafa; display: flex; justify-content: space-between; padding: 0 13px 0 14px; align-items: center; font-size: 21px; color: #666; margin-bottom: 3px; letter-spacing: 0; }
.chat-body { display: grid; grid-template-columns: 1fr 24px; border-bottom: 1px solid #ececec; overflow: hidden; }
.msgs { padding-left: 8px; margin-top: -9px; font-size: 18.7px; line-height: 25.5px; letter-spacing: 0; color: #3c3c3c; }
.from { color: #a3a3a3; font-size: 17.3px; }
.cscroll { background: #f0f0f0; display: flex; flex-direction: column; align-items: center; padding: 9px 0 8px; }
.cscroll i { width: 22px; height: 26px; background: #cdcdcd; margin: auto 0 8px; }
.chat-form { display: grid; grid-template: 35px 68px / 85px 304px 91px; row-gap: 7px; padding: 7px 0 0 14px; }
.chat-form label { font-size: 19.5px; line-height: 35px; color: #777; }
.select { border: 1px solid #d8d8d8; display: flex; align-items: center; justify-content: space-between; padding: 0 8px; font-size: 17.5px; color: #666; }
.input { grid-column: 1 / 3; border: 1px solid #d8d8d8; }
.chat-form button { height: 36px; margin-left: 6px; width: 91px; background: #838485; color: #fff; border: 0; border-radius: 3px; font: 16px "Open Sans", sans-serif; letter-spacing: 0.2px; }

/* host taskbar */
.taskbar { display: grid; grid-template-columns: 72px 515px 825px 1fr; background: #dbdbdb; color: #111; }
.start { display: grid; place-items: center; }
.search { border: 2px solid #c9c9c9; background: #fff; display: flex; align-items: center; padding: 2px 0 0 15px; font-size: 21.5px; color: #333; gap: 18px; }
.apps { display: grid; grid-template-columns: repeat(11, 75px); margin-left: -1px; }
.apps div { display: grid; place-items: center; }
.apps .tv { margin-right: 3px; }
.apps .run { background: linear-gradient(#c30052, #c30052) center bottom / 61px 3px no-repeat; }
.apps .cur { background: linear-gradient(#c30052, #c30052) center bottom / 73px 3px no-repeat, linear-gradient(#f8f8f8, #f8f8f8) center / 73px 60px no-repeat; }
.tray { display: grid; grid-template-columns: 38px 31px 44px 41px 44px 48px 125px 56px 1fr; padding-left: 75px; align-items: center; font-size: 18px; letter-spacing: -0.25px; }
.tray .clock { line-height: 27px; padding-top: 1px; }
.tray .time { padding-right: 15px; }
.note { margin-top: 14px; }
.edge { width: 1px; height: 60px; background: #aaa; }
```
